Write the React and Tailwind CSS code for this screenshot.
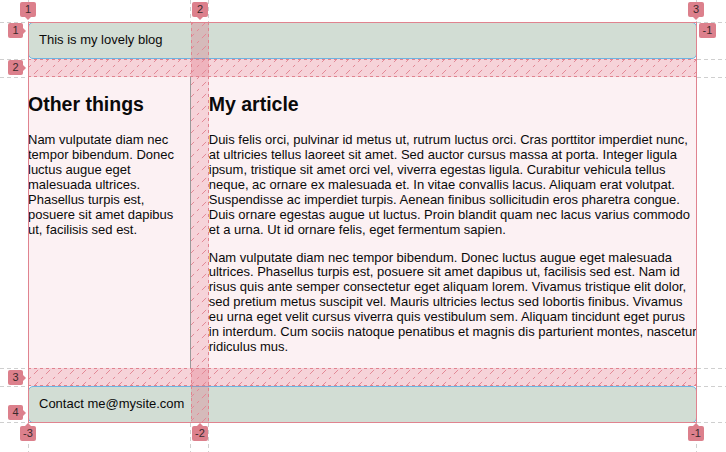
import React from "react";

const Label = ({ text, className, arrow }) => (
  <div className={"absolute flex items-center justify-center rounded-[2px] bg-[#dc808c] text-[11px] leading-none text-[#3a2a2c] " + className}>
    {text}
    {arrow}
  </div>
);

const down = <span className="absolute left-1/2 -bottom-[3px] -ml-[3px] h-0 w-0 border-x-[3px] border-t-[3px] border-x-transparent border-t-[#dc808c]" />;
const up = <span className="absolute left-1/2 -top-[3px] -ml-[3px] h-0 w-0 border-x-[3px] border-b-[3px] border-x-transparent border-b-[#dc808c]" />;
const right = <span className="absolute top-1/2 -right-[3px] -mt-[3px] h-0 w-0 border-y-[3px] border-l-[3px] border-y-transparent border-l-[#dc808c]" />;

export default function App() {
  const hLines = [22.5, 59.5, 77.5, 368.5, 386.5, 422.5];
  const vLines = [28.5, 190.5, 208.5, 696.5];
  return (
    <div className="relative h-[452px] w-[726px] overflow-hidden bg-white font-['Liberation_Sans',Arial,sans-serif] text-[13px] leading-[1.15] text-[#0a0a0a]">
      <div className="pt-[22px] pl-[28px]">
        <div className="grid w-[669px] grid-cols-[1fr_3fr] gap-[18px]">
          <header className="col-span-2 rounded-[5px] border border-[#6db4e2] bg-[#d2ddd4] p-[10px]">
            This is my lovely blog
          </header>
          <aside className="border-r border-[#9a9a9a] bg-[#fcf1f3] pr-[4px]">
            <h2 className="mt-[16px] mb-[18px] text-[19.5px] font-bold leading-[22px]">Other things</h2>
            <p className="mb-[13px]">
              Nam vulputate diam nec tempor bibendum. Donec luctus augue eget malesuada ultrices. Phasellus turpis est, posuere sit amet dapibus ut, facilisis sed est.
            </p>
          </aside>
          <article className="bg-[#fcf1f3]">
            <h2 className="mt-[16px] mb-[18px] text-[19.5px] font-bold leading-[22px]">My article</h2>
            <p className="mb-[13px]">
              Duis felis orci, pulvinar id metus ut, rutrum luctus orci. Cras porttitor imperdiet nunc, at ultricies tellus laoreet sit amet. Sed auctor cursus massa at porta. Integer ligula ipsum, tristique sit amet orci vel, viverra egestas ligula. Curabitur vehicula tellus neque, ac ornare ex malesuada et. In vitae convallis lacus. Aliquam erat volutpat. Suspendisse ac imperdiet turpis. Aenean finibus sollicitudin eros pharetra congue. Duis ornare egestas augue ut luctus. Proin blandit quam nec lacus varius commodo et a urna. Ut id ornare felis, eget fermentum sapien.
            </p>
            <p className="mb-[13px]">
              Nam vulputate diam nec tempor bibendum. Donec luctus augue eget malesuada ultrices. Phasellus turpis est, posuere sit amet dapibus ut, facilisis sed est. Nam id risus quis ante semper consectetur eget aliquam lorem. Vivamus tristique elit dolor, sed pretium metus suscipit vel. Mauris ultricies lectus sed lobortis finibus. Vivamus eu urna eget velit cursus viverra quis vestibulum sem. Aliquam tincidunt eget purus in interdum. Cum sociis natoque penatibus et magnis dis parturient montes, nascetur ridiculus mus.
            </p>
          </article>
          <footer className="col-span-2 rounded-[5px] border border-[#6db4e2] bg-[#d2ddd4] p-[10px]">
            Contact me@mysite.com
          </footer>
        </div>
      </div>

      <svg className="pointer-events-none absolute inset-0" width="726" height="452">
        <defs>
          <pattern id="hatch" patternUnits="userSpaceOnUse" width="12" height="12">
            <path d="M0 12 L12 0" stroke="#e38996" strokeWidth="1" strokeDasharray="3 4" />
          </pattern>
        </defs>
        <g fill="#e06078" fillOpacity="0.28">
          <rect x="28" y="59" width="669" height="18" />
          <rect x="28" y="368" width="669" height="18" />
          <rect x="191" y="22" width="18" height="401" />
        </g>
        <g fill="url(#hatch)">
          <rect x="28" y="59" width="669" height="18" />
          <rect x="28" y="368" width="669" height="18" />
          <rect x="191" y="22" width="18" height="401" />
        </g>
        <g stroke="#cfcfcf" strokeDasharray="4 3" strokeWidth="1">
          {hLines.map((y) => (
            <g key={"h" + y}>
              <line x1="0" y1={y} x2="28" y2={y} />
              <line x1="697" y1={y} x2="726" y2={y} />
            </g>
          ))}
          {vLines.map((x) => (
            <g key={"v" + x}>
              <line x1={x} y1="0" x2={x} y2="22" />
              <line x1={x} y1="423" x2={x} y2="452" />
            </g>
          ))}
        </g>
        <g stroke="#e0838f" strokeDasharray="3 3" strokeWidth="1">
          {[59.5, 76.5, 368.5, 385.5].map((y) => (
            <line key={"ih" + y} x1="28" y1={y} x2="697" y2={y} />
          ))}
          <line x1="191.5" y1="22" x2="191.5" y2="77" />
          <line x1="191.5" y1="368" x2="191.5" y2="423" />
          <line x1="208.5" y1="22" x2="208.5" y2="423" />
        </g>
        <rect x="28.5" y="22.5" width="668" height="400" fill="none" stroke="#e0838f" strokeWidth="1" />
      </svg>

      <Label text="1" className="left-[20px] top-[2px] h-[15px] w-[16px]" arrow={down} />
      <Label text="2" className="left-[192px] top-[2px] h-[15px] w-[16px]" arrow={down} />
      <Label text="3" className="left-[688px] top-[2px] h-[15px] w-[16px]" arrow={down} />
      <Label text="-1" className="left-[699px] top-[23px] h-[15px] w-[17px]" />
      <Label text="1" className="left-[8px] top-[23px] h-[15px] w-[15px]" arrow={right} />
      <Label text="2" className="left-[8px] top-[60px] h-[15px] w-[15px]" arrow={right} />
      <Label text="3" className="left-[8px] top-[370px] h-[15px] w-[15px]" arrow={right} />
      <Label text="4" className="left-[8px] top-[405px] h-[15px] w-[15px]" arrow={right} />
      <Label text="-3" className="left-[20px] top-[426px] h-[15px] w-[16px]" arrow={up} />
      <Label text="-2" className="left-[192px] top-[426px] h-[15px] w-[16px]" arrow={up} />
      <Label text="-1" className="left-[688px] top-[426px] h-[15px] w-[16px]" arrow={up} />
    </div>
  );
}
